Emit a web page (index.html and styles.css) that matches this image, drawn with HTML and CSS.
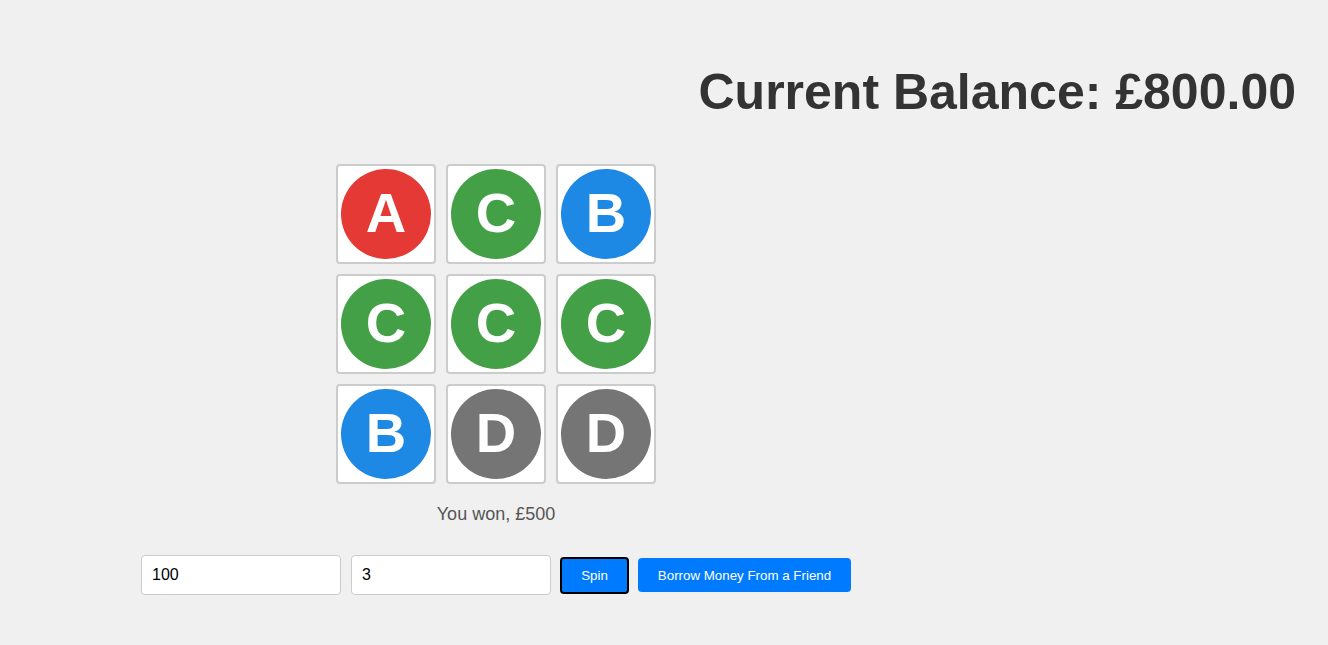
FILE: index.html
```html
<!DOCTYPE html>
<html lang="en">
<head>
<meta charset="utf-8">
<title>Slot Machine</title>
<link rel="stylesheet" href="styles.css">
</head>
<body>
<header class="topbar">
  <h1 class="balance">Current Balance: £800.00</h1>
</header>
<main class="game">
  <div class="reels">
    <div class="cell"><span class="sym sym-a">A</span></div>
    <div class="cell"><span class="sym sym-c">C</span></div>
    <div class="cell"><span class="sym sym-b">B</span></div>
    <div class="cell"><span class="sym sym-c">C</span></div>
    <div class="cell"><span class="sym sym-c">C</span></div>
    <div class="cell"><span class="sym sym-c">C</span></div>
    <div class="cell"><span class="sym sym-b">B</span></div>
    <div class="cell"><span class="sym sym-d">D</span></div>
    <div class="cell"><span class="sym sym-d">D</span></div>
  </div>
  <p class="message">You won, £500</p>
  <div class="controls">
    <input class="field" type="text" value="100">
    <input class="field" type="text" value="3">
    <button class="btn btn-spin">Spin</button>
    <button class="btn btn-borrow">Borrow Money From a Friend</button>
  </div>
</main>
</body>
</html>
```
FILE: styles.css
```css
html, body {
  margin: 0;
  padding: 0;
}
body {
  background: #f0f0f0;
  font-family: "Liberation Sans", Arial, sans-serif;
  color: #333;
}
.topbar {
  display: flex;
  justify-content: flex-end;
  padding: 63px 32px 0 0;
}
.balance {
  margin: 0;
  font-size: 50px;
  line-height: 58px;
  font-weight: bold;
  color: #333;
}
.game {
  width: 976px;
  margin-left: 8px;
  padding-top: 43px;
  display: flex;
  flex-direction: column;
  align-items: center;
}
.reels {
  display: grid;
  grid-template-columns: repeat(3, 100px);
  grid-auto-rows: 100px;
  gap: 10px;
}
.cell {
  box-sizing: border-box;
  background: #fff;
  border: 2px solid #ccc;
  border-radius: 4px;
  display: flex;
  align-items: center;
  justify-content: center;
}
.sym {
  width: 90px;
  height: 90px;
  border-radius: 50%;
  display: flex;
  align-items: center;
  justify-content: center;
  color: #fff;
  font-weight: bold;
  font-size: 56px;
  line-height: 1;
  padding-bottom: 3px;
  box-sizing: border-box;
}
.sym-a { background: #e53935; }
.sym-b { background: #1e88e5; }
.sym-c { background: #43a047; }
.sym-d { background: #757575; }
.message {
  margin: 20px 0 0;
  font-size: 18px;
  line-height: 20px;
  color: #555;
}
.controls {
  margin-top: 31px;
  display: flex;
  align-items: center;
  gap: 9px;
}
.field {
  box-sizing: border-box;
  width: 200px;
  height: 40px;
  padding: 0 10px;
  border: 1px solid #ccc;
  border-radius: 4px;
  background: #fff;
  font-family: "Liberation Sans", Arial, sans-serif;
  font-size: 16px;
  color: #000;
  outline: none;
}
.field + .field {
  margin-left: 1px;
}
.btn {
  box-sizing: border-box;
  background: #007bff;
  color: #fff;
  border: none;
  border-radius: 4px;
  font-family: "Liberation Sans", Arial, sans-serif;
  font-size: 13.333px;
  cursor: pointer;
}
.btn-spin {
  width: 69px;
  height: 37px;
  border: 2px solid #000;
}
.btn-borrow {
  width: 213px;
  height: 34px;
}
```
